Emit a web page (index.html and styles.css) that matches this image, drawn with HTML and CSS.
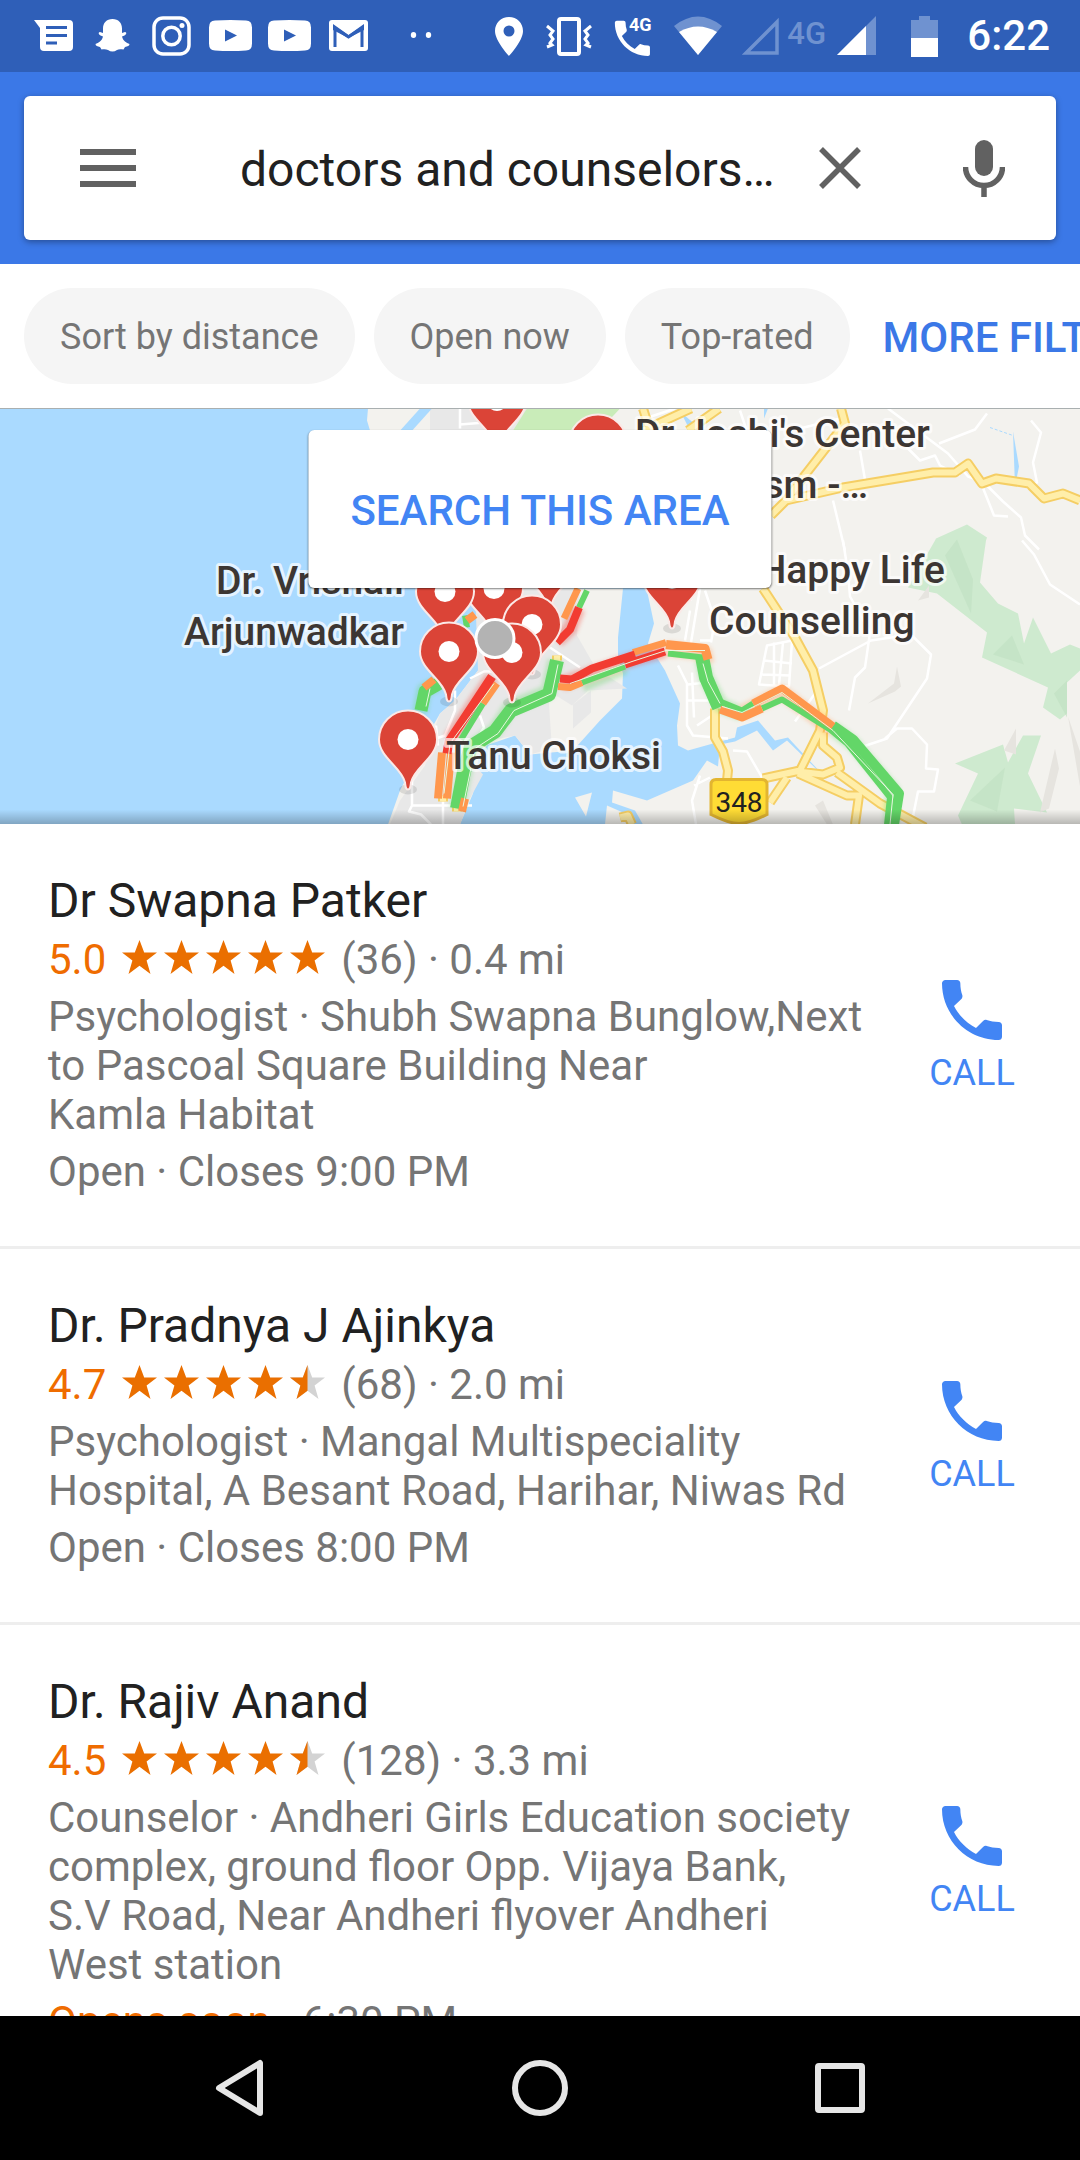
FILE: index.html
```html
<!DOCTYPE html>
<html lang="en">
<head>
<meta charset="utf-8">
<meta name="viewport" content="width=device-width">
<title>Maps search results</title>
<link rel="stylesheet" href="styles.css">
</head>
<body>
<svg class="defs" aria-hidden="true">
  <defs>
    <path id="phone" d="M6.6 10.8c1.4 2.8 3.800 5.100 6.600 6.600l2.200-2.200c.3-.3.7-.4 1-.2 1.100.4 2.300.6 3.600.6.600 0 1 .4 1 1V20c0 .600-.4 1-1 1C10.600 21 3 13.400 3 4c0-.600.500-1 1-1h3.500c.600 0 1 .500 1 1 0 1.300.2 2.500.6 3.600.1.300 0 .700-.2 1z"/>
    <path id="star" d="M17.500 0l4.700 12.500H35L24.600 20.500 28.500 34l-11-8.200L6.500 34l3.900-13.500L0 12.500h12.800z"/>
    <g id="pin">
      <ellipse cx="0" cy="50" rx="9" ry="5" fill="#000" opacity=".1"/>
      <path d="M0 50c-2.500 0-2.500-3-3-7C-6 28-29 18-29 0a29 29 0 0 1 58 0C29 18 6 28 3 43c-.5 4-.5 7-3 7z" fill="#db4437" stroke="#fbe9e7" stroke-width="2"/>
      <circle r="10.500" fill="#fff"/>
    </g>
  </defs>
</svg>
<div class="screen">
  <div class="status">
    <div class="notifications">
      <svg viewBox="0 0 43 40"><path fill="#fff" d="M2 4h35a4 4 0 0 1 4 4v23a4 4 0 0 1-4 4H12a4 4 0 0 1-4-4V12z"/><path stroke="#2f5fb8" stroke-width="3" d="M14 11.500h21M14 19.500h21M14 27h11"/></svg>
      <svg viewBox="0 0 43 40"><path fill="#fff" d="M21.500 3c6 0 9.500 4 9.500 9.500v4.500l3-1c2 .5 1.500 2.500-.5 3.500l-2.500 1c1 4.500 4.500 6.500 7.500 7.500 0 2-2 2.500-4.500 3l-1.500 2.500c-3-.5-5-.5-6.500.5-3 2-6 2-9 0-2-1-4-1-6.500-.5L9 31c-2.500-.5-4.500-1-4.500-3 3-1 6.500-3 7.500-7.500l-2.500-1c-2-1-2.500-3-.5-3.500l3 1v-4.500C12 7 15.500 3 21.500 3z"/></svg>
      <svg viewBox="0 0 43 40"><g fill="none" stroke="#fff"><rect x="4" y="2" width="35" height="36" rx="9" stroke-width="3.500"/><circle cx="21.500" cy="20" r="8.700" stroke-width="3.500"/></g><circle cx="32" cy="9.500" r="2.500" fill="#fff"/></svg>
      <svg viewBox="0 0 43 40"><path fill="#fff" d="M6 4.500q15.500-1 31 0 6 0 6 7v16q0 7-6 7-15.500 1-31 0-6 0-6-7v-16q0-7 6-7z"/><path fill="#2f5fb8" d="M16 13.500v12L28 19.500z"/></svg>
      <svg viewBox="0 0 43 40"><path fill="#fff" d="M6 4.500q15.500-1 31 0 6 0 6 7v16q0 7-6 7-15.500 1-31 0-6 0-6-7v-16q0-7 6-7z"/><path fill="#2f5fb8" d="M16 13.500v12L28 19.500z"/></svg>
      <svg viewBox="0 0 43 40"><rect x="2" y="4" width="39" height="31" rx="3" fill="#fff"/><path d="M8 31V12l13.500 9L35 12v19" fill="none" stroke="#2f5fb8" stroke-width="3"/><path d="M6 8l15.500 11L37 8v6L21.500 22 6 14z" fill="#2f5fb8"/></svg>
      <svg class="more" viewBox="0 0 43 40"><ellipse cx="11.500" cy="19" rx="2.700" ry="3" fill="#fff"/><ellipse cx="26.500" cy="19" rx="2.700" ry="3" fill="#fff"/></svg>
    </div>
    <div class="system">
      <svg viewBox="0 0 48 40"><path fill="#fff" fill-rule="evenodd" d="M24 1c8 0 14 6 14 14 0 10-14 25-14 25S10 25 10 15C10 7 16 1 24 1zm0 8.500a5.500 5.500 0 1 0 0 11 5.500 5.500 0 0 0 0-11z"/></svg>
      <svg viewBox="3 0 48 40"><g fill="none" stroke="#fff"><rect x="14" y="3" width="20" height="35" rx="2" stroke-width="4"/><path stroke-width="3" d="M2 10l6 5-3 4 3 4-3 4 2 2-5 2M46 10l-6 5 3 4-3 4 3 4-2 2 5 2"/></g></svg>
      <svg viewBox="3 0 48 40"><use href="#phone" fill="#fff" transform="translate(1 -1) scale(1.950)"/><text x="21" y="15" class="net-small">4G</text></svg>
      <svg viewBox="0 0 48 40"><path fill="#6f92d0" d="M0 10q24-19 48 0L24 39z"/><path fill="#fff" d="M5 16q19-11 38 0L24 39z"/></svg>
    </div>
    <div class="signals">
      <svg viewBox="0 0 39 40"><path d="M6 37H37V6z" fill="none" stroke="#6f92d0" stroke-width="3.500"/></svg>
      <span class="net">4G</span>
      <svg viewBox="0 0 39 40"><path fill="#6f92d0" d="M0 39L39 0v39z"/><path fill="#fff" d="M0 39L29 10v29z"/></svg>
    </div>
    <svg class="battery" viewBox="0 0 27 41"><path fill="#6f92d0" d="M8 0h11v4h8v18H0V4h8z"/><path fill="#fff" d="M0 22h27v19H0z"/></svg>
    <time class="clock">6:22</time>
  </div>

  <header class="header">
    <form class="search">
      <button type="button" aria-label="Menu"><svg class="i-menu" viewBox="0 0 56 38"><path fill="#616161" d="M0 0h56v6H0zM0 16h56v6H0zM0 32h56v6H0z"/></svg></button>
      <input type="text" aria-label="Search" value="doctors and counselors…">
      <button type="button" aria-label="Clear"><svg class="i-tool" viewBox="0 0 42 58"><path d="M2 10l38 38M40 10L2 48" stroke="#616161" stroke-width="5.500"/></svg></button>
      <button type="button" aria-label="Voice search"><svg class="i-tool" viewBox="0 0 42 58"><rect x="12" y="1" width="18" height="36" rx="9" fill="#616161"/><path d="M2.500 28a18.500 18.500 0 0 0 37 0M21 46v12" fill="none" stroke="#616161" stroke-width="5.500"/></svg></button>
    </form>
  </header>

  <nav class="filters" aria-label="Filters">
    <button type="button" class="chip">Sort by distance</button>
    <button type="button" class="chip">Open now</button>
    <button type="button" class="chip">Top-rated</button>
    <button type="button" class="more-filters">MORE FILTERS</button>
  </nav>

  <section class="map" aria-label="Map">
    <svg class="canvas" viewBox="0 408 1080 416" preserveAspectRatio="xMidYMid slice">
      <defs><filter id="glow" x="-5%" y="-5%" width="110%" height="110%"><feGaussianBlur stdDeviation="2"/></filter>
      <linearGradient id="fade" x1="0" y1="0" x2="0" y2="1"><stop offset="0" stop-color="#000" stop-opacity="0"/><stop offset="1" stop-color="#000" stop-opacity=".25"/></linearGradient></defs>
      <rect y="408" width="1080" height="416" fill="#aadaff"/>
      <g fill="#f3f2ee">
        <path d="M368 408L367 420 370 430 430 530 475 588H623L618 637V657L623 673 622 698 600 720 573 750 530 754 515 735 480 747 473 793 460 824H388L400 790 432 727 440 713 455 700 478 670 560 500 640 500V408z"/>
        <path d="M640 408H1080V824H643L635 810 612 802 613 790 647 800 693 780 707 760 718 766 720 744 735 741 757 730 773 750 787 740 828 780 788 737 775 740 758 720 737 727 735 737 713 743 688 750 678 745 677 725 680 703 665 670 648 643 654 623 647 590z"/>
        <path d="M575 797l17-5-6 24zM607 805l16 7 7 12h-25z"/>
      </g>
      <path fill="#e8e8e8" d="M430 408H540V588H580L577 635 596 668 627 688 588 690 572 705 548 690 552 748 530 754 515 735 491 740 473 762 483 774 470 798 460 824H390L400 800 425 765 432 735 440 713 455 700 478 670 475 588 430 530z"/>
      <path d="M420 408h12l-27 30h-12z" fill="#aadaff"/>
      <path d="M527 408h93l-15 16-20 14h-77z" fill="#c9ecb9"/>
      <path d="M573 704l18-14v22l-18 16z" fill="#e8e8e8"/>
      <g fill="#ceeacf">
        <path d="M935 540l1-2 31-14 20 13-1 3-6 42 18 21 20 10 6 30 9-26 18 36 19-9 10 4v22l-13 12v31l-7 6-17-12 5-20-66-30 5-25-50-39-29-6z"/>
        <path d="M955 763l48-19 5 18 15-27h18l-13 38 19 39-33-4 1 16h-53l-4-9 20-42z"/>
      </g>
      <g fill="#bfdfc1" opacity=".6"><path d="M945 555l12-16 16 40-2 34zM993 654l19-19 12 29zM1054 693l13-13v37zM970 800l35-33-8 44z"/></g>
      <g fill="#e6e4df"><path d="M868 703l26-20 3-17 4 20-6 5zM918 600l11-15v12zM1040 812l15-64 4 20-10 40zM1068 716l12 35v35zM1004 750l12-22v26zM815 805l8-5 10 24h-6z"/></g>
      <path d="M1013 431l6 35-4 20-2-55M764 408v10l4-10zM681 412l12 10-3 8z" fill="#aadaff"/>
      <path d="M990 427l23 8" stroke="#aadaff" stroke-dasharray="3 2"/>
      <g fill="none" stroke="#fff" stroke-width="2.500" stroke-linejoin="round">
        <path d="M843 540l5 32 2 24 20 36-5 35-10 10-6 33M819 668l52-28 40-6 20 20-4 24-40 60-30 10M885 738l12-10h15l15 16-1 24 12 1-4 22h-16l-6 30M767 645l25-5-3 46-30-2zM774 642v43M783 642l-4 42M764 660l28 3M762 674l28 1M795 721l25-35M705 590l10 30-4 22M700 588l-10 60M690 600l10-14M690 610l-5 30M700 640h12M678 665l9 18v42l6 10 35 3M692 672l2 45M688 684l18-2M688 700h22M697 725l30-20M733 750l14 1 15 26M694 785l16-8M700 775l-8 25 4 24"/>
        <path d="M888 408l60 45 20 23 15 5 20 20 18 16 4 18 14 14M982 485l12 30 14 1M960 475l-20-10-5-10-15 5-14-14M833 500l12 50M860 450l6 35M939 443l36-14 12-16M1031 420l10 12-8 30 4 20-10 6M800 428l40-10M1022 540l12 14 16 30 30 20M645 418l30-10M740 410l10 30M460 408v20M460 424l25-2"/>
        <path d="M455 690v20l-10 25-15 5M412 755v50h60M412 805l-3 6 12 3 10 10M470 678l14-7h26M550 647l30 20M438 745l-2-20M443 800v24M480 715l4 12-12 20"/>
      </g>
      <g fill="none" stroke-linejoin="round" stroke-linecap="butt">
        <g stroke="#f5ce64" stroke-width="10">
          <path id="road" d="M763 588l32 49 18 33 10 40-3 20-20 40-37 8M798 771l25 3 17-7-3-10-14-12v-13M837 772l43 31 45 24M798 773l49 22h12l-4 29M787 777l-17 25M715 708v29l8 14 5 19-1 10M771 515l15-15 57-13 90-15h22l13-9 14 20 14-5 33 5 15 15 19-5 17 7M841 408l4 15-42 54-17 23M643 408l7 22M691 408l-48 22M719 408l-31 22M557 655v5M443 795v6M457 805v6M620 817l8-2 4 9"/>
        </g>
        <use href="#road" stroke="#ffeea9" stroke-width="6"/>
        <g opacity=".35" filter="url(#glow)" stroke-width="15">
          <path stroke="#63d668" d="M420 712l4-22 14-7M555 660l-7 32-38 15-15 23-25 18-5 22-8 38M702 658l4 19 15 28 21 8M833 728l20 15 40 47-2 34M582 684l43-18"/>
          <path stroke="#ff974d" d="M667 648l38 5 2 10M742 712l40-20 51 38"/>
          <path stroke="#f23c32" d="M492 677l-42 62M562 683l73-25 30-8M578 608l-8 20-13 12"/>
        </g>
        <g stroke="#63d668">
          <path stroke-width="13" d="M421 710l4-19 14-8"/>
          <path stroke-width="14" d="M557 660l-8 34-38 16-16 21-24 15-7 25-7 37"/>
          <path stroke-width="6" d="M483 703l-22 36M587 590l-8 17M465 615l2 12"/>
          <path stroke-width="6" d="M582 682l43-16M668 653l35 4"/>
          <path stroke-width="14" d="M702 656l4 21 13 30"/>
          <path stroke-width="6" d="M720 701l22 9 11-7M762 708l20-9 48 30 17 14 43 54-3 27"/>
          <path stroke-width="10" d="M833 725l20 14 46 54-5 31"/>
        </g>
        <g stroke="#ff974d">
          <path stroke-width="8" d="M424 687l10-8M442 752l-4 46M451 752l-4 46M465 798l-3 13M720 709l22 8 20-9M753 703l29-15 51 38M467 620l8-6"/>
          <path stroke-width="7" d="M497 683l-14 20M558 686l12 1 12-5M633 652l33-10M578 588l-14 30"/>
          <path stroke-width="9" d="M666 644l39 4 3 11"/>
        </g>
        <g stroke="#f23c32">
          <path stroke-width="9" d="M492 676l-43 65-2 12"/>
          <path stroke-width="8" d="M560 678l12 1 20-11 43-14M625 664l40-13M579 607l-9 22-13 13"/>
        </g>
        <path stroke="#e8f8e0" stroke-width="1" d="M558 664l-6 29-38 17-16 23-23 15-12 58M426 706l4-18M703 663l5 18 12 22M722 706l20 6 40-20 51 38 60 64-3 30M570 683l62-22 34-11h39M494 683l-44 60-6 50"/>
      </g>
      <path d="M711 784q0-5 5-5h46q5 0 5 5v30q-18 9-28 9t-28-9z" fill="#ffdc35" stroke="#e3b530" stroke-width="3"/>
      <text x="739" y="811" class="shield">348</text>
      <g class="labels">
        <text x="635" y="446">Dr Joshi's Center</text>
        <text x="868" y="497" text-anchor="end">for Autism -…</text>
        <text x="945" y="582" text-anchor="end">Happy Life</text>
        <text x="709" y="633">Counselling</text>
        <text x="404" y="593" text-anchor="end">Dr. Vrishali</text>
        <text x="404" y="644" text-anchor="end">Arjunwadkar</text>
        <text x="446" y="768">Tanu Choksi</text>
      </g>
      <use href="#pin" x="497" y="400"/><use href="#pin" x="598" y="443"/><use href="#pin" x="672" y="578"/>
      <use href="#pin" x="549" y="560"/><use href="#pin" x="494" y="588"/><use href="#pin" x="445" y="591"/>
      <use href="#pin" x="532" y="624"/><use href="#pin" x="512" y="652"/><use href="#pin" x="449" y="651"/><use href="#pin" x="408" y="739"/>
      <circle cx="495" cy="638" r="19" fill="#b3b3b3" stroke="#fff" stroke-width="3"/>
      <rect y="809" width="1080" height="15" fill="url(#fade)"/>
    </svg>
    <button type="button" class="search-area">SEARCH THIS AREA</button>
  </section>

  <main class="results">
    <article class="result">
      <div class="info">
        <h2>Dr Swapna Patker</h2>
        <p class="rating"><span class="score">5.0</span><svg class="stars" viewBox="0 0 203 34" role="img" aria-label="5 stars"><g fill="#ea6f00"><use href="#star"/><use href="#star" x="42"/><use href="#star" x="84"/><use href="#star" x="126"/><use href="#star" x="168"/></g></svg><span>(36) · 0.4 mi</span></p>
        <p>Psychologist · Shubh Swapna Bunglow,Next<br>to Pascoal Square Building Near<br>Kamla Habitat</p>
        <p>Open · Closes 9:00 PM</p>
      </div>
      <a class="call" href="#call-1"><svg viewBox="3 3 18 18"><use href="#phone"/></svg>CALL</a>
    </article>
    <article class="result">
      <div class="info">
        <h2>Dr. Pradnya J Ajinkya</h2>
        <p class="rating"><span class="score">4.7</span><svg class="stars" viewBox="0 0 203 34" role="img" aria-label="4.5 stars"><g fill="#ea6f00"><use href="#star"/><use href="#star" x="42"/><use href="#star" x="84"/><use href="#star" x="126"/></g><use href="#star" x="168" fill="#d3d3d3"/><path fill="#ea6f00" d="M185.500 0v25.800L174.500 34l3.900-13.500L168 12.500h12.800z"/></svg><span>(68) · 2.0 mi</span></p>
        <p>Psychologist · Mangal Multispeciality<br>Hospital, A Besant Road, Harihar, Niwas Rd</p>
        <p>Open · Closes 8:00 PM</p>
      </div>
      <a class="call" href="#call-2"><svg viewBox="3 3 18 18"><use href="#phone"/></svg>CALL</a>
    </article>
    <article class="result">
      <div class="info">
        <h2>Dr. Rajiv Anand</h2>
        <p class="rating"><span class="score">4.5</span><svg class="stars" viewBox="0 0 203 34" role="img" aria-label="4.5 stars"><g fill="#ea6f00"><use href="#star"/><use href="#star" x="42"/><use href="#star" x="84"/><use href="#star" x="126"/></g><use href="#star" x="168" fill="#d3d3d3"/><path fill="#ea6f00" d="M185.500 0v25.800L174.500 34l3.900-13.500L168 12.500h12.800z"/></svg><span>(128) · 3.3 mi</span></p>
        <p>Counselor · Andheri Girls Education society<br>complex, ground floor Opp. Vijaya Bank,<br>S.V Road, Near Andheri flyover Andheri<br>West station</p>
        <p><span class="soon">Opens soon</span> · 6:30 PM</p>
      </div>
      <a class="call" href="#call-3"><svg viewBox="3 3 18 18"><use href="#phone"/></svg>CALL</a>
    </article>
  </main>

  <footer class="navbar">
    <button type="button" aria-label="Back"><svg viewBox="0 0 60 60"><path d="M50 5v50L9 30z" fill="none" stroke="#e6e6e6" stroke-width="6" stroke-linejoin="round"/></svg></button>
    <button type="button" aria-label="Home"><svg viewBox="0 0 60 60"><circle cx="30" cy="30" r="25" fill="none" stroke="#e6e6e6" stroke-width="6"/></svg></button>
    <button type="button" aria-label="Recent apps"><svg viewBox="0 0 60 60"><rect x="8" y="8" width="44" height="44" rx="1" fill="none" stroke="#e6e6e6" stroke-width="6" stroke-linejoin="round"/></svg></button>
  </footer>
</div>
</body>
</html>
```
FILE: styles.css
```css
* { box-sizing: border-box; }
body { margin: 0; font-family: Roboto, "Noto Sans", sans-serif; color: #212121; background: #fff; }
h2, p { margin: 0; }
button { margin: 0; padding: 0; border: 0; background: none; font: inherit; color: inherit; flex: none; }
svg { display: block; }
.defs { position: absolute; width: 0; height: 0; }

.screen { display: flex; flex-direction: column; height: 100vh; overflow: hidden; }

.status { display: flex; flex: none; align-items: center; height: 72px; padding: 0 30px 0 32px; background: #2f5fb8; color: #fff; }
.notifications { display: flex; gap: 16px; }
.notifications svg { width: 43px; height: 40px; }
.notifications .more { margin-left: 16px; }
.system { display: flex; gap: 15px; margin-left: auto; }
.system svg { width: 48px; height: 40px; overflow: visible; }
.net-small { font-size: 18px; font-weight: 700; fill: #fff; }
.signals { display: flex; align-items: center; gap: 6px; margin-left: 18px; }
.signals svg { width: 39px; height: 40px; }
.net { width: 46px; padding-left: 2px; font-size: 31px; line-height: 36px; font-weight: 500; color: #6f92d0; align-self: flex-start; }
.battery { width: 27px; height: 41px; margin-left: 35px; }
.clock { margin-left: 29px; font-size: 42px; line-height: 50px; font-weight: 500; }

.header { flex: none; padding: 24px; background: #3b78e7; }
.search { display: flex; align-items: center; gap: 102px; height: 144px; padding: 0 51px 0 56px; border-radius: 6px; background: #fff; box-shadow: 0 2px 6px rgba(0, 0, 0, .35); }
.search input { flex: 1; min-width: 0; margin-right: -60px; padding: 4px 0 0 2px; border: 0; outline: 0; background: none; font: 48px/56px Roboto, "Noto Sans", sans-serif; color: #212121; text-overflow: ellipsis; }
.i-menu { width: 56px; height: 38px; }
.i-tool { width: 42px; height: 58px; }

.filters { display: flex; flex: none; align-items: center; gap: 19px; height: 144px; padding: 0 24px; overflow: hidden; white-space: nowrap; }
.chip { height: 96px; padding: 2px 36px 0; border-radius: 48px; background: #f5f5f5; font-size: 36px; color: #757575; }
.more-filters { padding: 2px 14px 0; font-size: 42px; font-weight: 500; color: #3b78e7; }

.map { position: relative; flex: none; height: 416px; overflow: hidden; border-top: 1px solid #a9afb0; }
.canvas { width: 100%; height: 100%; }
.labels { font-size: 39px; font-weight: 500; fill: #3c3633; stroke: rgba(255, 255, 255, .7); stroke-width: 6px; stroke-linejoin: round; paint-order: stroke; }
.shield { font-size: 28px; fill: #212121; text-anchor: middle; }
.search-area { position: absolute; top: 21px; left: 50%; transform: translateX(-50%); height: 158px; padding: 2px 42px 0; border-radius: 6px; background: #fff; box-shadow: 0 1px 2px rgba(0, 0, 0, .5); font-size: 42px; font-weight: 500; color: #4285f4; white-space: nowrap; }

.results { flex: 1; min-height: 0; overflow: hidden; }
.result { display: flex; border-bottom: 3px solid #eee; }
.info { flex: 1; min-width: 0; padding: 49px 0 42px 48px; font-size: 42px; line-height: 49px; color: #757575; white-space: nowrap; }
.info h2 { margin-bottom: 6px; font-size: 48px; line-height: 56px; font-weight: 400; color: #212121; }
.info p { margin-bottom: 8px; }
.rating { display: flex; gap: 16px; }
.score, .soon { color: #ef6c00; }
.stars { width: 203px; height: 34px; margin-top: 5px; }
.call { display: flex; flex: none; flex-direction: column; align-items: center; justify-content: center; gap: 12px; width: 216px; padding-top: 4px; font-size: 36px; line-height: 42px; color: #4285f4; text-decoration: none; }
.call svg { width: 60px; height: 60px; fill: #4285f4; }

.navbar { display: grid; flex: none; grid-template-columns: repeat(3, 1fr); height: 144px; padding: 0 90px; background: #000; }
.navbar button { display: grid; place-items: center; }
.navbar svg { width: 60px; height: 60px; }
```
